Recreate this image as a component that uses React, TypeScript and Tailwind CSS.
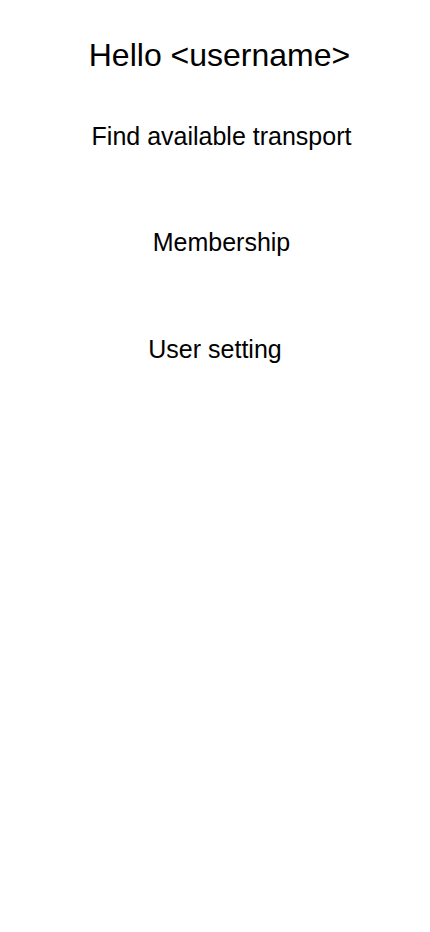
export default function App() {
  return (
    <div className="min-h-[932px] w-full bg-white text-black" style={{ fontFamily: '"Liberation Sans", Arial, sans-serif' }}>
      <div className="flex flex-col items-center">
        <h1 className="mt-[35px] pl-[9px] text-[32px] leading-[40px]">Hello &lt;username&gt;</h1>
        <div className="mt-[46px] pl-[13px] text-[25px] leading-[30px]">Find available transport</div>
        <div className="mt-[76px] pl-[13px] text-[25px] leading-[30px]">Membership</div>
        <div className="mt-[77px] text-[25px] leading-[30px]">User setting</div>
      </div>
    </div>
  );
}
